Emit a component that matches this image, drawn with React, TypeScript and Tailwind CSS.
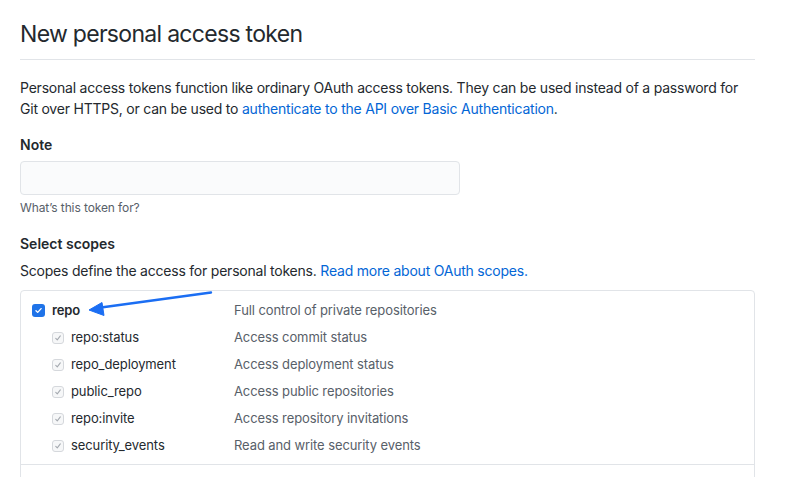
import React from "react";

// Scope rows under "repo"
const subScopes = [
  { name: "repo:status", desc: "Access commit status" },
  { name: "repo_deployment", desc: "Access deployment status" },
  { name: "public_repo", desc: "Access public repositories" },
  { name: "repo:invite", desc: "Access repository invitations" },
  { name: "security_events", desc: "Read and write security events" },
];

function BlueCheck() {
  return (
    <span className="w-[13px] h-[13px] rounded-[3px] bg-[#1f73e8] flex items-center justify-center flex-shrink-0">
      <svg width="9" height="9" viewBox="0 0 10 10" fill="none">
        <path d="M2.2 5.2 L4.1 7.1 L7.9 2.9" stroke="white" strokeWidth="1.5" strokeLinecap="round" strokeLinejoin="round" />
      </svg>
    </span>
  );
}

function GrayCheck() {
  return (
    <span className="w-[12px] h-[12px] rounded-[3px] border border-[#d5d8dc] bg-[#f6f7f8] flex items-center justify-center flex-shrink-0">
      <svg width="8" height="8" viewBox="0 0 10 10" fill="none">
        <path d="M2.2 5.4 L4.1 7.4 L7.9 2.4" stroke="#a3a8ae" strokeWidth="1.3" strokeLinecap="round" strokeLinejoin="round" />
      </svg>
    </span>
  );
}

export default function App() {
  return (
    <div
      className="min-h-screen bg-white text-[#24292e] px-5 pt-[18px]"
      style={{ fontFamily: "Inter, 'Noto Sans', sans-serif" }}
    >
      <div className="w-[735px]">
        <h1 className="text-[23px] leading-[32px] font-normal tracking-[-0.7px] pb-[9px] border-b border-[#e1e4e8]">
          New personal access token
        </h1>

        <p className="text-[14px] leading-[21px] mt-[17px] tracking-[-0.22px]">
          Personal access tokens function like ordinary OAuth access tokens. They can be used instead of a password for
          Git over HTTPS, or can be used to{" "}
          <a className="text-[#0366d6]">authenticate to the API over Basic Authentication</a>.
        </p>

        <div className="mt-[15px]">
          <label className="block text-[14px] leading-[21px] font-semibold">Note</label>
          <div className="mt-[6px] w-[440px] h-[34px] rounded-[4px] border border-[#e1e4e8] bg-[#fafbfc]" />
          <p className="text-[12px] leading-[18px] text-[#586069] mt-[4px] tracking-[-0.1px]">What’s this token for?</p>
        </div>

        <div className="mt-[16px]">
          <p className="text-[14px] leading-[21px] font-semibold">Select scopes</p>
          <p className="text-[14px] leading-[21px] mt-[6px] tracking-[-0.22px]">
            Scopes define the access for personal tokens.{" "}
            <a className="text-[#0366d6]">Read more about OAuth scopes.</a>
          </p>
        </div>

        <div className="relative mt-[9px] border border-[#e1e4e8] rounded-t-[4px] h-[200px]">
          <div className="pt-[9px] pb-[8px] border-b border-[#e1e4e8]">
            <div className="flex items-center h-[21px] text-[13px] pl-[11px] tracking-[-0.1px]">
              <BlueCheck />
              <span className="font-semibold ml-[7px] w-[182px]">repo</span>
              <span className="text-[#586069]">Full control of private repositories</span>
            </div>
            {subScopes.map((s) => (
              <div key={s.name} className="flex items-center h-[21px] mt-[6px] text-[13px] pl-[31px] tracking-[-0.1px]">
                <GrayCheck />
                <span className="ml-[7px] w-[163px]">{s.name}</span>
                <span className="text-[#586069]">{s.desc}</span>
              </div>
            ))}
          </div>

          {/* annotation arrow pointing at repo */}
          <svg className="absolute left-[40px] top-[0px]" width="160" height="30" viewBox="0 0 160 30" fill="none">
            <path d="M150 1.5 L40 16.5" stroke="#1b6ef3" strokeWidth="2.4" strokeLinecap="round" />
            <path d="M28 19 L41 11.5 L43 24.5 Z" fill="#1b6ef3" stroke="#1b6ef3" strokeWidth="1" strokeLinejoin="round" />
          </svg>
        </div>
      </div>
    </div>
  );
}
